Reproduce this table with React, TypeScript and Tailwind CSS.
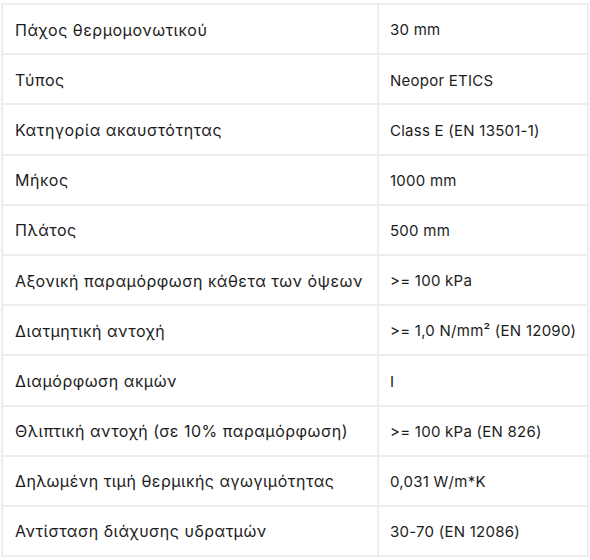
const rows: [string, React.ReactNode][] = [
  ["Πάχος θερμομονωτικού", "30 mm"],
  ["Τύπος", "Neopor ETICS"],
  ["Κατηγορία ακαυστότητας", "Class E (EN 13501-1)"],
  ["Μήκος", "1000 mm"],
  ["Πλάτος", "500 mm"],
  ["Αξονική παραμόρφωση κάθετα των όψεων", ">= 100 kPa"],
  [
    "Διατμητική αντοχή",
    <>
      &gt;= 1,0 N/mm² (EN 12090)
    </>,
  ],
  ["Διαμόρφωση ακμών", "I"],
  ["Θλιπτική αντοχή (σε 10% παραμόρφωση)", ">= 100 kPa (EN 826)"],
  ["Δηλωμένη τιμή θερμικής αγωγιμότητας", "0,031 W/m*K"],
  ["Αντίσταση διάχυσης υδρατμών", "30-70 (EN 12086)"],
]

export default function App() {
  return (
    <div className="w-[590px] h-[560px] bg-white pl-[1px] pt-[3px] font-['Inter','Noto_Sans',sans-serif] text-[15px] text-[#1c1c1c]">
      <table className="w-[588px] border-collapse">
        <tbody>
          {rows.map(([label, value], i) => (
            <tr key={i}>
              <td className="w-[376px] h-[50.2px] border-2 border-[#ededed] pl-[12px] pt-[1px] align-middle text-[16px] tracking-[0.5px]">
                {label}
              </td>
              <td className="h-[50.2px] border-2 border-[#ededed] pl-[11px] pt-[3px] align-middle tracking-[0.25px]">
                {value}
              </td>
            </tr>
          ))}
        </tbody>
      </table>
    </div>
  )
}
